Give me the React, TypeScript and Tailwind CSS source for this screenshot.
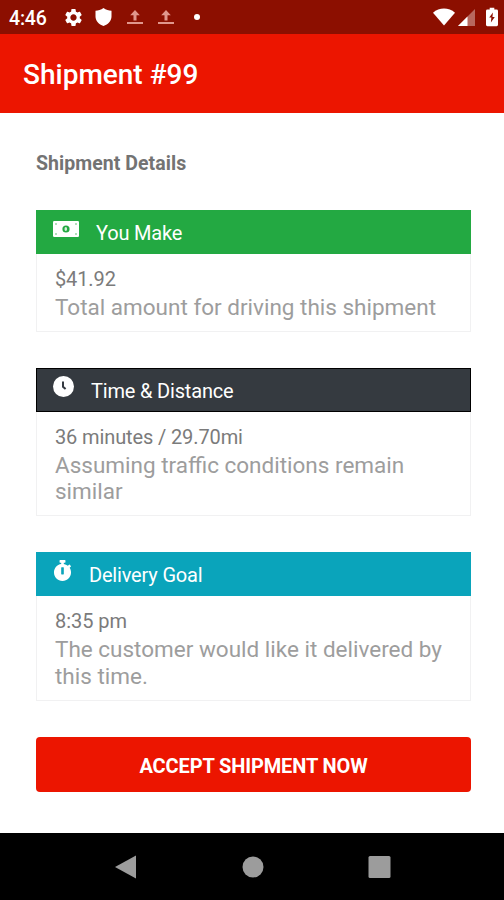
import type { ReactNode } from "react";
import { FaStopwatch } from "react-icons/fa";
import { MdSettings } from "react-icons/md";

type CardProps = {
  icon: ReactNode;
  title: string;
  headerClass: string;
  value: string;
  valueClass: string;
  text: string;
};

const UploadIcon = () => (
  <svg width="16" height="15" viewBox="0 0 16 15" fill="#e0968c">
    <path d="M8 0 12.8 5.3H9.5v5.2h-3V5.3H3.2z" />
    <rect x="0" y="12" width="16" height="2" />
  </svg>
);

const MoneyIcon = () => (
  <svg width="26" height="21" viewBox="0 0 26 21">
    <rect x="0" y="3" width="26" height="16" rx="1.2" fill="#fff" />
    <circle cx="13" cy="11" r="3.6" fill="#23a942" />
    <ellipse cx="12.8" cy="11" rx="1.3" ry="2.1" fill="#d5efda" />
    <g fill="#23a942">
      <circle cx="3" cy="6" r=".7" />
      <circle cx="23" cy="6" r=".7" />
      <circle cx="3" cy="16" r=".7" />
      <circle cx="23" cy="16" r=".7" />
    </g>
  </svg>
);

const ClockIcon = () => (
  <svg width="21" height="21" viewBox="0 0 21 21">
    <circle cx="10.5" cy="10.5" r="10.5" fill="#fff" />
    <path d="M10 5.5v5.2l2.6 2.4" fill="none" stroke="#353a40" strokeWidth="2" />
  </svg>
);

const StatusBar = () => {
  return (
    <div className="flex h-[34px] items-center justify-between bg-[#8c0f00] pr-[6px] pl-[9px] text-white">
      <div className="flex items-center">
        <span className="w-[54px] pt-[3px] text-[19.5px] leading-none font-medium tracking-[-0.2px]">
          4:46
        </span>
        <MdSettings size={21} />
        <svg className="ml-[11px]" width="17" height="18" viewBox="0 0 17 18" fill="currentColor">
          <path d="M8.5 0C6 1.8 3.2 2.6.5 2.8V8.5c0 4.3 3.3 8 8 9.5 4.7-1.5 8-5.2 8-9.5V2.8C13.8 2.6 11 1.8 8.500 0z" />
        </svg>
        <span className="ml-[15px] flex gap-[15px]">
          <UploadIcon />
          <UploadIcon />
        </span>
        <span className="ml-[20px] h-[6px] w-[6px] rounded-full bg-white" />
      </div>
      <div className="flex items-center">
        <svg width="22" height="18" viewBox="0 0 23 18" fill="currentColor">
          <path d="M0 4.5C6.5-1.3 16.500-1.3 23 4.5L11.5 18z" />
        </svg>
        <svg className="ml-[3px]" width="17" height="17" viewBox="0 0 17 17">
          <path d="M0 17 17 0v17z" fill="#b8685e" />
          <path d="M0 17 9.5 7.5V17z" fill="#fff" />
        </svg>
        <svg className="ml-[11px]" width="12" height="20" viewBox="0 0 13 20">
          <path
            d="M4 0h5v2h2.500Q13 2 13 3.500v15Q13 20 11.500 20h-10Q0 20 0 18.500v-15Q0 2 1.500 2H4z"
            fill="#fff"
          />
          <path d="M7.500 5 3.500 10.500h2.300L5.300 16l4.200-6H7z" fill="#8c0f00" />
        </svg>
      </div>
    </div>
  );
};

const Card = ({ icon, title, headerClass, value, valueClass, text }: CardProps) => {
  return (
    <div className="border border-t-0 border-[#f1f1f2]">
      <div className={`-mx-px flex h-[44px] pl-[17px] text-white ${headerClass}`}>
        <span className="pt-[8px]">{icon}</span>
        <span className="ml-[17px] pt-[11px] text-[20px] leading-[24px] tracking-[-0.18px]">
          {title}
        </span>
      </div>
      <div className="pt-[13px] pb-[10.5px] pl-[18px]">
        <p className={`text-[20px] leading-[24px] text-[#7b7b7b] ${valueClass}`}>{value}</p>
        <p className="mt-[3px] text-[22.5px] leading-[26.5px] text-[#9d9d9d]">{text}</p>
      </div>
    </div>
  );
};

const App = () => {
  return (
    <div className="flex h-[900px] w-[504px] flex-col bg-white font-['Roboto',sans-serif]">
      <StatusBar />
      <header className="flex h-[79px] items-center bg-[#ec1500] pt-[3px] pl-[23px]">
        <h1 className="text-[28px] leading-none font-medium text-white">Shipment #99</h1>
      </header>
      <main className="flex flex-1 flex-col pt-[39px] pr-[33px] pl-[36px]">
        <h2 className="text-[19.5px] leading-[24px] font-bold tracking-[0.05px] text-[#737373]">
          Shipment Details
        </h2>
        <div className="mt-[34px] flex flex-col gap-[35.75px]">
          <Card
            icon={<MoneyIcon />}
            title="You Make"
            headerClass="bg-[#23a942]"
            value="$41.92"
            valueClass="tracking-[-0.12px]"
            text="Total amount for driving this shipment"
          />
          <Card
            icon={<ClockIcon />}
            title="Time & Distance"
            headerClass="bg-[#353a40] inset-ring inset-ring-black"
            value="36 minutes / 29.70mi"
            valueClass="tracking-[-0.12px]"
            text="Assuming traffic conditions remain similar"
          />
          <Card
            icon={<FaStopwatch className="h-[21px] w-[19px]" />}
            title="Delivery Goal"
            headerClass="bg-[#0aa4bb]"
            value="8:35 pm"
            valueClass="tracking-[-0.05px]"
            text="The customer would like it delivered by this time."
          />
        </div>
        <button className="mt-[36px] h-[55px] rounded-[4px] bg-[#ec1500] pt-[4px] text-[20px] font-bold tracking-[-0.12px] text-white">
          ACCEPT SHIPMENT NOW
        </button>
      </main>
      <nav className="flex h-[67px] items-center bg-black pl-[115px]">
        <svg width="276" height="24" viewBox="0 0 276 24" fill="#9c9c9c">
          <path d="M0 12 21 .5v23z" />
          <circle cx="138" cy="12" r="10.5" />
          <rect x="253.500" y="1" width="22" height="22" rx="1.5" />
        </svg>
      </nav>
    </div>
  );
};

export default App;
